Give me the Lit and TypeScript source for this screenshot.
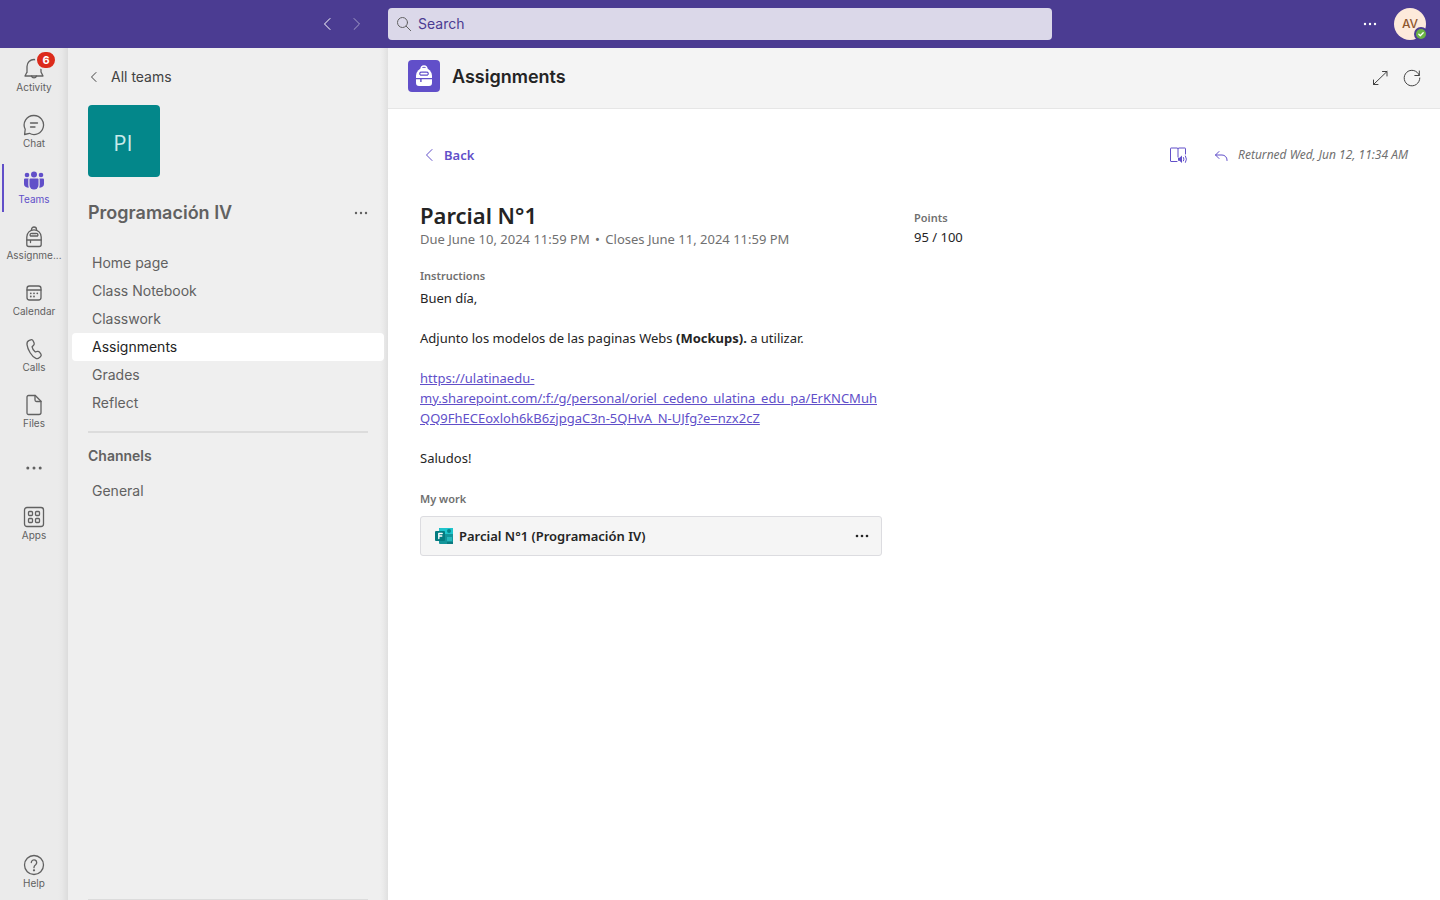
import { LitElement, html, css, svg } from "lit";
import { customElement } from "lit/decorators.js";
import { classMap } from "lit/directives/class-map.js";

const icons = {
  bell: svg`<path d="M5 15.5V9.5a7 7 0 0 1 14 0v5.500l2 4H3l2-4" /><path d="M9.500 19a2.600 2.600 0 0 0 5 0" />`,
  chat: svg`<path d="M12 2.500a9.500 9.500 0 1 1-4.600 17.800L2.600 21.500l.6-5.200A9.500 9.500 0 0 1 12 2.500z" /><path d="M8.500 10h7M8.500 14h4.500" />`,
  teams: svg`<g fill="currentColor" stroke="none"><circle cx="12" cy="5.500" r="3" /><circle cx="5" cy="6" r="2.300" /><circle cx="19" cy="6" r="2.300" /><path d="M8.500 9.500h7a1 1 0 0 1 1 1V16a4.500 4.500 0 0 1-9 0v-5.500a1 1 0 0 1 1-1z" /><path d="M3.200 9.500h3.500q-.4.500-.4 1.200V16c0 1 .2 1.800.6 2.600C4 19 2 17.200 2 15v-4.300c0-.7.5-1.200 1.200-1.200zM20.800 9.500h-3.500q.4.500.4 1.200V16c0 1-.2 1.800-.6 2.600 2.900.4 4.900-1.400 4.900-3.600v-4.300c0-.7-.5-1.200-1.200-1.200z" /></g>`,
  backpack: svg`<path d="M9.500 5V4.500a2.500 2.500 0 0 1 5 0V5" /><path d="M4.800 12a7.200 7.200 0 0 1 14.400 0v7.500a2 2 0 0 1-2 2H6.800a2 2 0 0 1-2-2z" /><path d="M4.800 15h14.400M8.500 15v2.500" /><path d="M10 8.500h4a1.500 1.500 0 0 1 1.500 2.500H8.500A1.500 1.500 0 0 1 10 8.500z" />`,
  calendar: svg`<rect x="5" y="5" width="14" height="14" rx="2.500" /><path d="M5 9h14" /><g fill="currentColor" stroke="none"><circle cx="8.800" cy="12.300" r=".9" /><circle cx="12" cy="12.300" r=".9" /><circle cx="15.300" cy="12.300" r=".9" /><circle cx="8.800" cy="15.500" r=".9" /><circle cx="12" cy="15.500" r=".9" /></g>`,
  calls: svg`<path d="M7.300 3.300l1.500-.5c1-.3 2 .2 2.400 1.100l.9 2.100c.3.800.1 1.700-.5 2.300l-1.500 1.500c.3 1.700 1.800 4.200 3.200 5.200l2-.6c.8-.2 1.700 0 2.200.7l1.300 1.800c.6.800.5 1.900-.2 2.600l-1.100 1.100c-1 .9-2.400 1.300-3.600.8C9.700 19.600 5.700 12.700 5 7.600c-.2-1.900.6-3.700 2.300-4.300z" />`,
  files: svg`<path d="M6.500 2.500h6.800l5.700 5.700v11.300a2 2 0 0 1-2 2H6.500a1.500 1.500 0 0 1-1.500-1.500V4a1.500 1.500 0 0 1 1.500-1.500z" /><path d="M13 2.500v4.500a1.500 1.500 0 0 0 1.500 1.500H19" />`,
  apps: svg`<rect x="2.500" y="2.500" width="19" height="19" rx="2.500" /><rect x="6.500" y="6.500" width="4" height="4" rx="1" /><rect x="13.500" y="6.500" width="4" height="4" rx="1" /><rect x="6.500" y="13.500" width="4" height="4" rx="1" /><rect x="13.500" y="13.500" width="4" height="4" rx="1" />`,
  help: svg`<circle cx="12" cy="12" r="9.500" /><path d="M9.300 9.500a2.700 2.700 0 1 1 4.300 2.200c-1 .7-1.600 1.300-1.600 2.600v.4" /><circle cx="12" cy="17.300" r=".5" fill="currentColor" />`,
  more: svg`<g fill="currentColor" stroke="none"><circle cx="5.800" cy="12" r="1.500" /><circle cx="12" cy="12" r="1.500" /><circle cx="18.200" cy="12" r="1.500" /></g>`,
};

const railItems = [
  { icon: "bell", label: "Activity", badge: "6" },
  { icon: "chat", label: "Chat" },
  { icon: "teams", label: "Teams", active: true },
  { icon: "backpack", label: "Assignme...", title: "Assignments" },
  { icon: "calendar", label: "Calendar" },
  { icon: "calls", label: "Calls" },
  { icon: "files", label: "Files" },
  { icon: "more", label: "" },
  { icon: "apps", label: "Apps" },
];

const pages = ["Home page", "Class Notebook", "Classwork", "Assignments", "Grades", "Reflect"];

const shared = css`
  * { box-sizing: border-box; }
  button {
    font: inherit;
    color: inherit;
    background: none;
    border: 0;
    padding: 0;
    display: flex;
    align-items: center;
    justify-content: center;
    cursor: pointer;
  }
  a { color: inherit; text-decoration: none; }
  h1, h2, h3, p, ul { margin: 0; padding: 0; }
  ul { list-style: none; }
  svg {
    display: block;
    flex: none;
    fill: none;
    stroke: currentColor;
    stroke-width: 1.3;
    stroke-linecap: round;
    stroke-linejoin: round;
  }
  svg.thin { stroke-width: 1; }
  svg.solid { stroke: none; }
`;

@customElement("top-bar")
export class TopBar extends LitElement {
  static styles = [shared, css`
    :host {
      display: grid;
      grid-template-columns: 388px minmax(0, 664px) 1fr;
      align-items: center;
      height: 48px;
      background: #4b3c92;
      color: #fff;
    }
    .history { display: flex; justify-content: flex-end; gap: 4px; padding-right: 20px; }
    .history button { width: 24px; height: 24px; }
    .forward { opacity: 0.5; }
    .search {
      display: flex;
      align-items: center;
      gap: 6px;
      height: 32px;
      padding: 0 8px;
      border-radius: 4px;
      background: #dbd8e9;
      color: #616161;
    }
    .search input {
      flex: 1;
      min-width: 0;
      border: 0;
      padding: 0;
      outline: 0;
      background: none;
      font: inherit;
      color: #4b3c92;
    }
    .search input::placeholder { color: #4b3c92; opacity: 1; }
    .account { display: flex; justify-content: flex-end; align-items: center; gap: 12px; padding-right: 14px; }
    .avatar {
      position: relative;
      width: 32px;
      height: 32px;
      border-radius: 50%;
      background: #fdeadb;
      color: #8e562e;
      font-size: 12px;
      font-weight: 500;
    }
    .presence { position: absolute; right: -2px; bottom: -1px; }
  `];

  render() {
    return html`
      <nav class="history">
        <button aria-label="Back"><svg class="thin" width="16" height="16" viewBox="0 0 16 16"><path d="M10 2.500 4.500 8l5.500 5.500" /></svg></button>
        <button class="forward" aria-label="Forward"><svg class="thin" width="16" height="16" viewBox="0 0 16 16"><path d="M6 2.500 11.500 8 6 13.500" /></svg></button>
      </nav>
      <label class="search">
        <svg class="thin" width="16" height="16" viewBox="0 0 16 16"><circle cx="6.500" cy="6.500" r="5" /><path d="m10.200 10.200 4.500 4.500" /></svg>
        <input type="text" placeholder="Search" aria-label="Search" />
      </label>
      <div class="account">
        <button aria-label="Settings and more"><svg width="24" height="24" viewBox="0 0 24 24"><g fill="currentColor" stroke="none"><circle cx="7" cy="12" r="1.200" /><circle cx="12" cy="12" r="1.200" /><circle cx="17" cy="12" r="1.200" /></g></svg></button>
        <button class="avatar" aria-label="Account">AV
          <svg class="presence" width="14" height="14" viewBox="0 0 14 14"><circle cx="7" cy="7" r="7" fill="#4b3c92" stroke="none" /><circle cx="7" cy="7" r="5" fill="#6bb344" stroke="none" /><path d="m4.800 7.200 1.500 1.500 2.900-3" stroke="#fff" /></svg>
        </button>
      </div>`;
  }
}

@customElement("app-rail")
export class AppRail extends LitElement {
  static styles = [shared, css`
    :host {
      display: flex;
      flex-direction: column;
      justify-content: space-between;
      background: linear-gradient(to left, #dcdcdc, #e8e8e8 6px, #ebebeb 10px);
      color: #616161;
    }
    .item {
      position: relative;
      flex-direction: column;
      justify-content: flex-start;
      width: 100%;
      height: 56px;
      padding-top: 9px;
      font-size: 10px;
      line-height: 12px;
    }
    .item.bare { justify-content: center; padding-top: 0; }
    .item.active { color: #614fc9; }
    .item.active::before {
      content: "";
      position: absolute;
      left: 2px;
      top: 4px;
      bottom: 4px;
      width: 2px;
      background: #614fc9;
    }
    .badge {
      position: absolute;
      left: 35px;
      top: 2px;
      width: 22px;
      height: 20px;
      border: 2px solid #ebebeb;
      border-radius: 10px;
      background: #dc2b1b;
      color: #fff;
      font-size: 11px;
      font-weight: 700;
      line-height: 16px;
      text-align: center;
    }
  `];

  item(entry) {
    return html`<button
      class=${classMap({ item: true, active: !!entry.active, bare: !entry.label })}
      aria-label=${entry.title ?? (entry.label || "More apps")}
    >
      <svg width="24" height="24" viewBox="0 0 24 24">${icons[entry.icon]}</svg>
      ${entry.label ? html`<span>${entry.label}</span>` : ""}
      ${entry.badge ? html`<span class="badge">${entry.badge}</span>` : ""}
    </button>`;
  }

  render() {
    return html`
      <nav>${railItems.map((entry) => this.item(entry))}</nav>
      <nav>${this.item({ icon: "help", label: "Help" })}</nav>`;
  }
}

@customElement("team-panel")
export class TeamPanel extends LitElement {
  static styles = [shared, css`
    :host {
      display: flex;
      flex-direction: column;
      background: linear-gradient(to left, #e0e0e0, #ebebeb 5px, #efefef 8px);
      color: #616161;
      line-height: 20px;
    }
    .all {
      display: flex;
      align-items: center;
      gap: 11px;
      padding: 19px 20px 18px;
      color: #424242;
    }
    .tile {
      display: flex;
      align-items: center;
      justify-content: center;
      width: 72px;
      height: 72px;
      margin-left: 20px;
      padding: 2px 2px 0 0;
      border-radius: 4px;
      background: #03878a;
      color: #c9eaea;
      font-family: "Open Sans", "Noto Sans", sans-serif;
      font-size: 22px;
    }
    .name {
      display: flex;
      align-items: center;
      justify-content: space-between;
      padding: 24px 15px 0 20px;
    }
    .name h2 { font-size: 18px; font-weight: 600; line-height: 24px; }
    .pages { padding: 24px 4px 0; }
    .pages a {
      display: block;
      height: 28px;
      padding: 0 20px;
      border-radius: 4px;
      line-height: 28px;
    }
    .pages a.current { background: #fff; color: #242424; }
    .rule { height: 2px; margin: 14px 20px 0; background: #dcdcdc; }
    h3 { padding: 13px 20px 0; font-size: 14px; font-weight: 600; line-height: 20px; }
    .channels { padding-top: 11px; }
    .foot { height: 1px; margin: auto 20px 0; background: #dcdcdc; }
  `];

  render() {
    return html`
      <a class="all" href="#teams">
        <svg class="thin" width="12" height="12" viewBox="0 0 12 12"><path d="M8 1.500 3.500 6 8 10.500" /></svg>
        All teams
      </a>
      <div class="tile">PI</div>
      <div class="name">
        <h2>Programación IV</h2>
        <button aria-label="More options"><svg width="24" height="24" viewBox="0 0 24 24"><g fill="currentColor" stroke="none"><circle cx="7" cy="12" r="1.200" /><circle cx="12" cy="12" r="1.200" /><circle cx="17" cy="12" r="1.200" /></g></svg></button>
      </div>
      <ul class="pages">
        ${pages.map((page) => html`<li><a class=${classMap({ current: page === "Assignments" })} href="#page">${page}</a></li>`)}
      </ul>
      <div class="rule"></div>
      <h3>Channels</h3>
      <ul class="pages channels"><li><a href="#general">General</a></li></ul>
      <div class="foot"></div>`;
  }
}

@customElement("assignment-view")
export class AssignmentView extends LitElement {
  static styles = [shared, css`
    :host { display: flex; flex-direction: column; background: #fff; color: #242424; }
    header {
      display: flex;
      align-items: center;
      gap: 12px;
      height: 61px;
      padding: 0 18px 4px 20px;
      border-bottom: 1px solid #e6e6e6;
      background: #f4f4f4;
    }
    .logo { border-radius: 4px; background: #614fc9; color: #614fc9; }
    header h1 { flex: 1; padding-top: 2px; font-size: 18px; font-weight: 600; line-height: 24px; }
    .tools { display: flex; gap: 12px; color: #424242; padding-top: 4px; }
    .body {
      padding: 36px 32px;
      font-family: "Noto Sans", "Open Sans", sans-serif;
      font-size: 13px;
      line-height: 20px;
    }
    .bar { display: flex; align-items: center; justify-content: space-between; }
    .back { gap: 6px; color: #614fc9; font-weight: 600; }
    .status { display: flex; align-items: center; gap: 10px; color: #707070; font-size: 12px; font-style: italic; }
    .status svg { color: #614fc9; }
    .status button { margin-right: 16px; }
    .columns { display: grid; grid-template-columns: 1fr 1fr; padding-top: 36px; }
    .details { padding-right: 32px; }
    h2 { font-size: 22px; font-weight: 600; line-height: 28px; }
    .due { color: #707070; }
    .dot { margin: 0 2px; }
    h3 { color: #707070; font-size: 11px; font-weight: 600; line-height: 16px; }
    .details h3 { padding: 19px 0 4px; }
    .text { display: grid; gap: 20px; margin-bottom: 4px; }
    .text a { color: #614fc9; text-decoration: underline; overflow-wrap: anywhere; }
    .details .work { padding-bottom: 9px; }
    .file {
      display: flex;
      align-items: center;
      gap: 5px;
      height: 40px;
      padding: 0 8px 0 13px;
      border: 1px solid #dcdce0;
      border-radius: 3px;
      background: #f5f5f5;
      font-weight: 600;
    }
    .file a { flex: 1; }
    .points { padding-top: 9px; }
    .points p { padding-top: 1px; }
  `];

  render() {
    return html`
      <header>
        <svg class="logo solid" width="32" height="32" viewBox="0 0 32 32">
          <path d="M13.200 9.500V8.800a2.800 2.800 0 0 1 5.600 0v.7" stroke="#fff" stroke-width="1.500" />
          <path d="M8 18v-2.200a8 8 0 0 1 16 0V18z" fill="#fff" />
          <path d="M8 19.200h4.200V22h1.400v-2.800H24V23a3 3 0 0 1-3 3H11a3 3 0 0 1-3-3z" fill="#fff" />
          <path d="M13.800 12.200h4.400a1.600 1.600 0 0 1 1.300 2.900h-7a1.600 1.600 0 0 1 1.300-2.900z" fill="#fff" stroke="currentColor" stroke-width="1.200" />
        </svg>
        <h1>Assignments</h1>
        <div class="tools">
          <button aria-label="Expand"><svg class="thin" width="20" height="20" viewBox="0 0 20 20"><path d="M12.500 3.500H17V8M17 3.500 3.500 16.500M3.500 12v4.500H8" /></svg></button>
          <button aria-label="Reload"><svg class="thin" width="20" height="20" viewBox="0 0 20 20"><path d="M17.300 7.300A7.800 7.800 0 1 0 17.800 10M17.300 3v4.500h-4.500" /></svg></button>
        </div>
      </header>
      <section class="body">
        <div class="bar">
          <button class="back"><svg class="thin" width="18" height="18" viewBox="0 0 18 18"><path d="M12 3.500 6.500 9l5.500 5.500" /></svg>Back</button>
          <div class="status">
            <button aria-label="Immersive reader">
              <svg class="thin" width="20" height="20" viewBox="0 0 20 20"><path d="M9 16.500H3a.5.500 0 0 1-.5-.5V3.500A.500.500 0 0 1 3 3h6q1 0 1 1 0-1 1-1h6a.5.500 0 0 1 .5.500V9M10 4v8" /><path d="M10 12.700h1.500l2.500-2.200v7.500l-2.500-2.200H10z" fill="currentColor" stroke="none" /><path d="M15.500 12.500q1 1.700 0 3.400M17.500 11q2 3.200 0 6.400" /></svg>
            </button>
            <svg class="thin" width="14" height="14" viewBox="0 0 14 14"><path d="M5 3.500 1.500 7 5 10.500M1.500 7H8a5 5 0 0 1 5 5v.5" /></svg>
            <span>Returned Wed, Jun 12, 11:34 AM</span>
          </div>
        </div>
        <div class="columns">
          <div class="details">
            <h2>Parcial N°1</h2>
            <p class="due">Due June 10, 2024 11:59 PM <span class="dot">•</span> Closes June 11, 2024 11:59 PM</p>
            <h3>Instructions</h3>
            <div class="text">
              <p>Buen día,</p>
              <p>Adjunto los modelos de las paginas Webs <b>(Mockups).</b> a utilizar.</p>
              <p><a href="#mockups">https://ulatinaedu-<br />my.sharepoint.com/:f:/g/personal/oriel_cedeno_ulatina_edu_pa/ErKNCMuh<br />QQ9FhECEoxloh6kB6zjpgaC3n-5QHvA_N-UJfg?e=nzx2cZ</a></p>
              <p>Saludos!</p>
            </div>
            <h3 class="work">My work</h3>
            <div class="file">
              <svg class="solid" width="20" height="20" viewBox="0 0 20 20"><path d="M5 2h14v16H6a1 1 0 0 1-1-1z" fill="#12959a" /><path d="M6 2h13v6H5V3a1 1 0 0 1 1-1z" fill="#1fc5cc" /><circle cx="15" cy="5" r="2" fill="#05868c" /><path d="M13 11h5v4h-5z" fill="#26b8bd" /><path d="M13 16h6v2h-6z" fill="#0a7a80" /><rect x="1" y="5" width="10" height="10" rx="1" fill="#037b80" /><path d="M4.800 12.500v-5h3.400M4.800 10h3" stroke="#fff" stroke-width="1.400" /></svg>
              <a href="#file">Parcial N°1 (Programación IV)</a>
              <button aria-label="File options"><svg width="22" height="22" viewBox="0 0 22 22"><g fill="currentColor" stroke="none"><circle cx="6" cy="11" r="1.300" /><circle cx="11" cy="11" r="1.300" /><circle cx="16" cy="11" r="1.300" /></g></svg></button>
            </div>
          </div>
          <div class="points">
            <h3>Points</h3>
            <p>95 / 100</p>
          </div>
        </div>
      </section>`;
  }
}

@customElement("app-root")
export class AppRoot extends LitElement {
  static styles = css`
    :host {
      display: grid;
      grid-template-rows: auto 1fr;
      min-height: 100vh;
      font-family: Inter, Roboto, sans-serif;
      font-size: 14px;
      line-height: 20px;
    }
    .shell { display: grid; grid-template-columns: 68px 320px minmax(0, 1fr); }
  `;

  render() {
    return html`
      <top-bar></top-bar>
      <div class="shell">
        <app-rail></app-rail>
        <team-panel></team-panel>
        <assignment-view></assignment-view>
      </div>`;
  }
}
